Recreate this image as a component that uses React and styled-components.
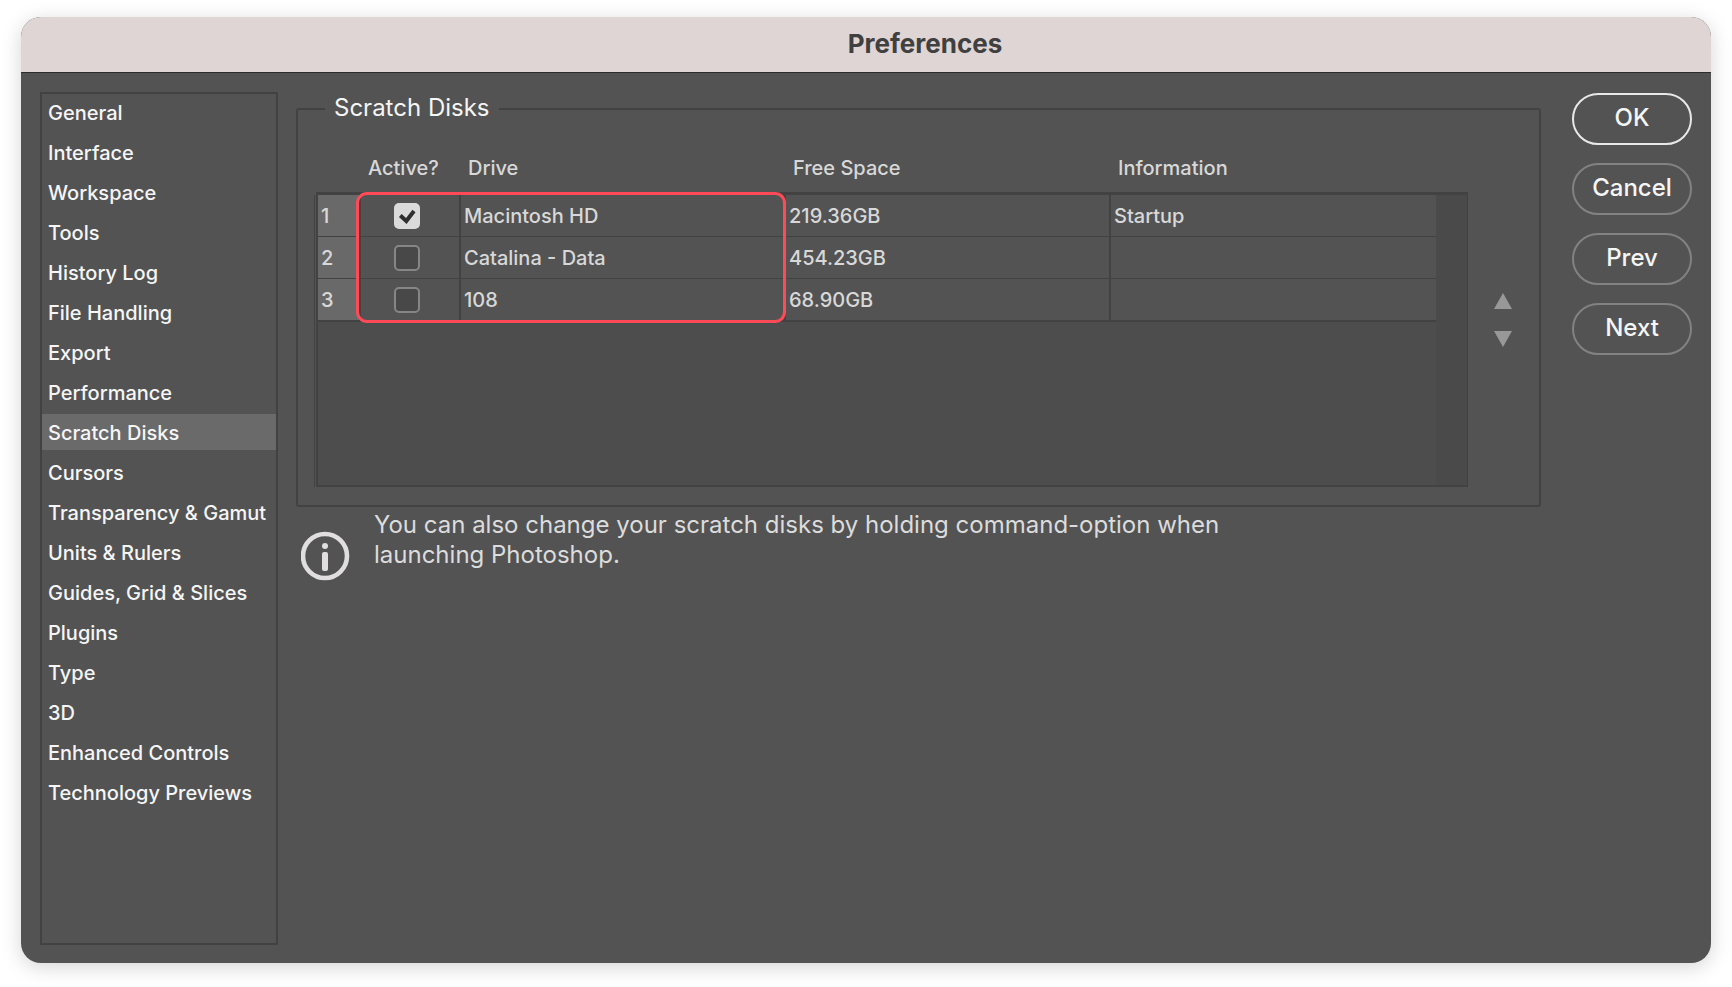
import React, { useState } from "react";

import styled, { createGlobalStyle } from "styled-components";

const GlobalStyle = createGlobalStyle`
    * {
        box-sizing: border-box;
    }

    body {
        margin: 0;
        background: #ffffff;
        font-family: Inter, "Liberation Sans", sans-serif;
    }

    button,
    input {
        font-family: inherit;
        margin: 0;
    }
`;

const Page = styled.div`
    min-height: 100vh;
    padding: 17px 21px 24px;
    display: flex;
`;

const Window = styled.main`
    flex: 1;
    display: flex;
    flex-direction: column;
    overflow: hidden;
    border-radius: 20px;
    background: #535353;
    box-shadow: 0 4px 20px rgba(0, 0, 0, 0.17);
`;

const TitleBar = styled.header`
    height: 56px;
    padding: 0 0 2px 118px;
    display: flex;
    align-items: center;
    justify-content: center;
    background: #dfd5d4;
    border-bottom: 1px solid #2c2c2c;
`;

const Title = styled.h1`
    margin: 0;
    font-size: 26px;
    line-height: 32px;
    font-weight: 700;
    color: #404040;
`;

const Body = styled.div`
    flex: 1;
    display: flex;
    padding: 19px 19px 18px;
`;

const Sidebar = styled.nav`
    width: 238px;
    flex-shrink: 0;
    margin-right: 18px;
    border: 2px solid #424242;
`;

const SideList = styled.ul`
    margin: 0;
    padding: 0;
    list-style: none;
    display: flex;
    flex-direction: column;
    gap: 4px;
`;

const SideLink = styled.a`
    display: block;
    padding: 2px 6px 0;
    font-size: 20px;
    line-height: 34px;
    font-weight: 500;
    color: #f5f5f5;
    white-space: nowrap;
    text-decoration: none;
    background: ${(props) => (props.$active ? "#6a6a6a" : "transparent")};
`;

const Content = styled.section`
    flex: 1;
    min-width: 0;
`;

const Group = styled.fieldset`
    min-width: 0;
    margin: 1px 0 0;
    padding: 20px 27px 18px 18px;
    border: 2px solid #424242;
    border-radius: 3px;
`;

const GroupTitle = styled.legend`
    margin-left: 9px;
    padding: 0 9px 2px;
    font-size: 24px;
    line-height: 30px;
    color: #f5f5f5;
`;

const GroupRow = styled.div`
    display: flex;
    align-items: center;
    gap: 26px;
`;

const TableWrap = styled.div`
    position: relative;
    flex: 1;
`;

const Table = styled.table`
    width: 100%;
    table-layout: fixed;
    border-collapse: separate;
    border-spacing: 0;
    font-size: 20px;
    line-height: 24px;
    font-weight: 500;
    color: #d8d8d8;
`;

const Col = styled.col`
    width: ${(props) => props.$width || "auto"};
`;

const HeadCell = styled.th`
    height: 50px;
    padding: 0 7px 2px;
    font-weight: 500;
    text-align: left;
    border-bottom: 3px solid #424242;
`;

const Cell = styled.td`
    height: ${(props) => (props.$last ? "43px" : "42px")};
    padding: 0 3px;
    border-bottom: ${(props) => (props.$last ? "2px" : "1px")} solid #424242;
    border-right: ${(props) => (props.$open ? "0" : "2px")} solid #424242;
`;

const NumberCell = styled(Cell)`
    background: #696969;
    border-left: 2px solid #424242;
    box-shadow: -1px 0 0 #535353, -2px 0 0 #424242;
`;

const CheckCell = styled(Cell)`
    padding: 0 6px 0 0;
    text-align: center;
`;

const Filler = styled.td`
    height: 165px;
    padding: 0;
    background: #4d4d4d;
    border-left: 2px solid #424242;
    border-bottom: 2px solid #424242;
    box-shadow: -1px 0 0 #535353, -2px 0 0 #424242;
`;

const Gutter = styled.td`
    padding: 0;
    background: #4a4a4a;
    border-right: 1px solid #404040;
    border-bottom: 2px solid #424242;
`;

const CheckLabel = styled.label`
    display: inline-grid;
    vertical-align: middle;
    width: 26px;
    height: 26px;

    svg {
        grid-area: 1 / 1;
        pointer-events: none;
    }
`;

const Checkbox = styled.input`
    grid-area: 1 / 1;
    appearance: none;
    width: 26px;
    height: 26px;
    border: 2px solid #868686;
    border-radius: 5px;
    background: #484848;

    &:checked {
        border-color: #dadada;
        background: #dadada;
    }
`;

/* runs over the Active? and Drive columns */
const Highlight = styled.div`
    position: absolute;
    top: 47px;
    left: 40px;
    width: calc(100% / 3 + 46px);
    height: 131px;
    border: 3px solid #ff4b57;
    border-radius: 11px;
    pointer-events: none;
`;

const Arrows = styled.div`
    display: flex;
    flex-direction: column;
    gap: 22px;
    padding-top: 8px;
`;

const ArrowButton = styled.button`
    display: block;
    width: 18px;
    height: 16px;
    padding: 0;
    border: 0;
    background: none;

    svg {
        display: block;
    }
`;

const Hint = styled.div`
    display: flex;
    align-items: flex-start;
    gap: 24px;
    padding: 3px 0 0 5px;
`;

const HintIcon = styled.svg`
    flex-shrink: 0;
    margin-top: 21px;
`;

const HintText = styled.p`
    margin: 0;
    max-width: 880px;
    font-size: 24px;
    line-height: 30px;
    color: #dcdcdc;
`;

const Actions = styled.div`
    display: flex;
    flex-direction: column;
    gap: 18px;
    margin: 1px 0 0 31px;
`;

const ActionButton = styled.button`
    width: 120px;
    height: 52px;
    padding: 0 0 2px;
    border: 2px solid ${(props) => (props.$primary ? "#e8e8e8" : "#828282")};
    border-radius: 26px;
    background: none;
    font-size: 24px;
    line-height: 30px;
    font-weight: 500;
    color: #f5f5f5;
`;

const sections = [
    "General",
    "Interface",
    "Workspace",
    "Tools",
    "History Log",
    "File Handling",
    "Export",
    "Performance",
    "Scratch Disks",
    "Cursors",
    "Transparency & Gamut",
    "Units & Rulers",
    "Guides, Grid & Slices",
    "Plugins",
    "Type",
    "3D",
    "Enhanced Controls",
    "Technology Previews",
];

const drives = [
    { id: 1, name: "Macintosh HD", free: "219.36GB", info: "Startup", active: true },
    { id: 2, name: "Catalina - Data", free: "454.23GB", info: "", active: false },
    { id: 3, name: "108", free: "68.90GB", info: "", active: false },
];

const actions = ["OK", "Cancel", "Prev", "Next"];

const App = () => {
    const [current, setCurrent] = useState("Scratch Disks");
    const [disks, setDisks] = useState(drives);

    const toggle = (id) => {
        setDisks((prev) => prev.map((item) => (item.id === id ? { ...item, active: !item.active } : item)));
    };

    return (
        <>
            <GlobalStyle />
            <Page>
                <Window>
                    <TitleBar>
                        <Title>Preferences</Title>
                    </TitleBar>
                    <Body>
                        <Sidebar>
                            <SideList>
                                {sections.map((name) => (
                                    <li key={name}>
                                        <SideLink href="#" $active={name === current} onClick={() => setCurrent(name)}>
                                            {name}
                                        </SideLink>
                                    </li>
                                ))}
                            </SideList>
                        </Sidebar>

                        <Content>
                            <Group>
                                <GroupTitle>Scratch Disks</GroupTitle>
                                <GroupRow>
                                    <TableWrap>
                                        <Table>
                                            <colgroup>
                                                <Col $width="45px" />
                                                <Col $width="100px" />
                                                <Col />
                                                <Col />
                                                <Col />
                                                <Col $width="32px" />
                                            </colgroup>
                                            <thead>
                                                <tr>
                                                    <HeadCell />
                                                    <HeadCell>Active?</HeadCell>
                                                    <HeadCell>Drive</HeadCell>
                                                    <HeadCell>Free Space</HeadCell>
                                                    <HeadCell>Information</HeadCell>
                                                    <HeadCell />
                                                </tr>
                                            </thead>
                                            <tbody>
                                                {disks.map((item, index) => {
                                                    const last = index === disks.length - 1;
                                                    return (
                                                        <tr key={item.id}>
                                                            <NumberCell $last={last}>{item.id}</NumberCell>
                                                            <CheckCell $last={last}>
                                                                <CheckLabel>
                                                                    <Checkbox
                                                                        type="checkbox"
                                                                        aria-label={item.name}
                                                                        checked={item.active}
                                                                        onChange={() => toggle(item.id)}
                                                                    />
                                                                    {item.active && (
                                                                        <svg width="26" height="26" viewBox="0 0 26 26">
                                                                            <path
                                                                                d="M6.3 12.6 L12.3 18 L20 8"
                                                                                fill="none"
                                                                                stroke="#2f2f2f"
                                                                                strokeWidth="4"
                                                                            />
                                                                        </svg>
                                                                    )}
                                                                </CheckLabel>
                                                            </CheckCell>
                                                            <Cell $last={last}>{item.name}</Cell>
                                                            <Cell $last={last}>{item.free}</Cell>
                                                            <Cell $last={last} $open>
                                                                {item.info}
                                                            </Cell>
                                                            {index === 0 && <Gutter rowSpan={disks.length + 1} />}
                                                        </tr>
                                                    );
                                                })}
                                                <tr>
                                                    <Filler colSpan={5} />
                                                </tr>
                                            </tbody>
                                        </Table>
                                        <Highlight />
                                    </TableWrap>
                                    <Arrows>
                                        <ArrowButton type="button" aria-label="Move up">
                                            <svg width="18" height="16" viewBox="0 0 18 16">
                                                <path d="M9 0 L18 16 H0 Z" fill="#989898" />
                                            </svg>
                                        </ArrowButton>
                                        <ArrowButton type="button" aria-label="Move down">
                                            <svg width="18" height="16" viewBox="0 0 18 16">
                                                <path d="M0 0 H18 L9 16 Z" fill="#989898" />
                                            </svg>
                                        </ArrowButton>
                                    </Arrows>
                                </GroupRow>
                            </Group>

                            <Hint>
                                <HintIcon width="49" height="50" viewBox="0 0 49 50">
                                    <circle cx="24" cy="25" r="22" fill="none" stroke="#e0dede" strokeWidth="4.6" />
                                    <circle cx="24" cy="15" r="3" fill="#e0dede" />
                                    <rect x="21" y="21" width="6" height="19" rx="2" fill="#e0dede" />
                                </HintIcon>
                                <HintText>
                                    You can also change your scratch disks by holding command-option when launching
                                    Photoshop.
                                </HintText>
                            </Hint>
                        </Content>

                        <Actions>
                            {actions.map((name) => (
                                <ActionButton key={name} type="button" $primary={name === "OK"}>
                                    {name}
                                </ActionButton>
                            ))}
                        </Actions>
                    </Body>
                </Window>
            </Page>
        </>
    );
};

export default App;
